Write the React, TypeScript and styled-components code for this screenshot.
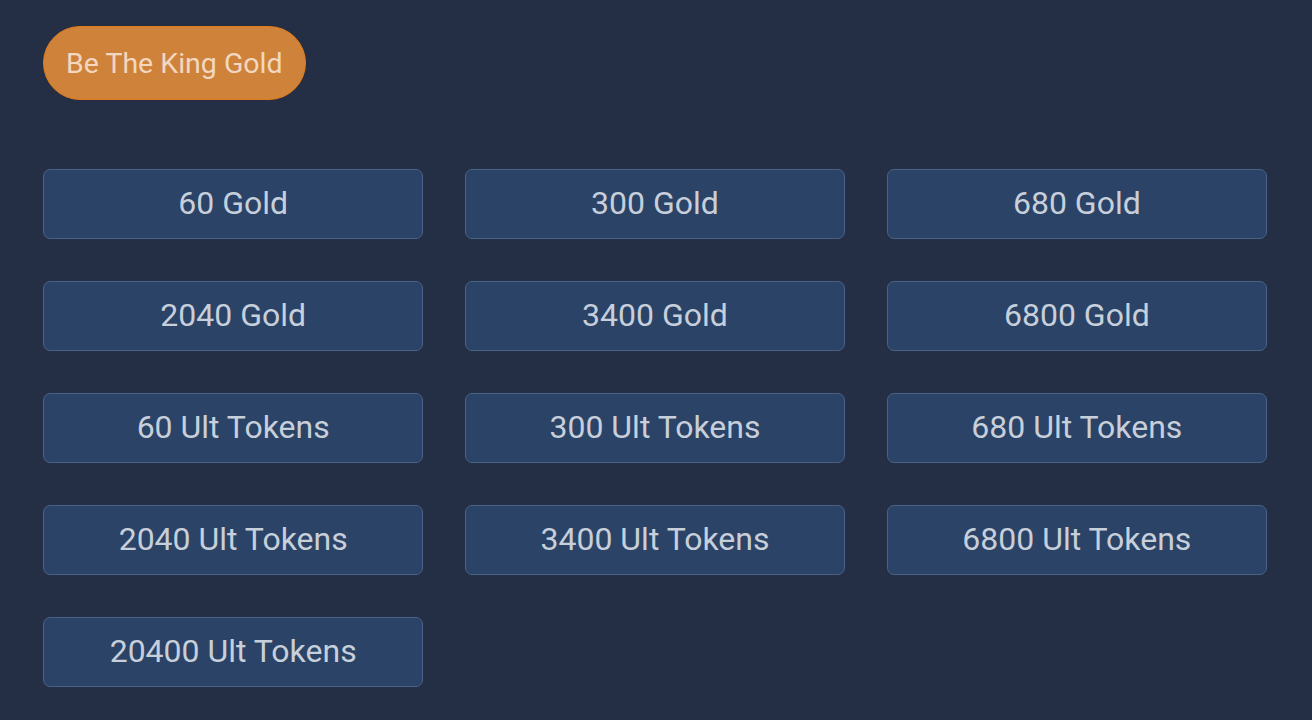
import React from 'react';
import styled, { createGlobalStyle } from 'styled-components';

const GlobalStyle = createGlobalStyle`
  html, body {
    margin: 0;
    padding: 0;
    background: #242e45;
  }
  body {
    font-family: Roboto, 'Liberation Sans', sans-serif;
  }
`;

const Page = styled.div`
  min-height: 720px;
  box-sizing: border-box;
  padding: 26px 45px 0 43px;
  background: #242e45;
`;

const Badge = styled.button`
  display: inline-flex;
  align-items: center;
  justify-content: center;
  height: 74px;
  padding: 0 22px;
  border-radius: 37px;
  border: 1.5px solid #e27a16;
  background: #cf823a;
  color: #f2d8c0;
  font-family: Roboto, 'Liberation Sans', sans-serif;
  font-size: 28.5px;
  cursor: pointer;
`;

const Grid = styled.div`
  margin-top: 69px;
  display: grid;
  grid-template-columns: repeat(3, 1fr);
  column-gap: 41.5px;
  row-gap: 42px;
`;

const Item = styled.button`
  height: 70px;
  padding: 0 0 2px;
  border-radius: 7px;
  border: 1.5px solid #4a6285;
  background: #2b4366;
  color: #c7cfdb;
  font-family: Roboto, 'Liberation Sans', sans-serif;
  font-size: 32px;
  cursor: pointer;
`;

const items = [
  '60 Gold',
  '300 Gold',
  '680 Gold',
  '2040 Gold',
  '3400 Gold',
  '6800 Gold',
  '60 Ult Tokens',
  '300 Ult Tokens',
  '680 Ult Tokens',
  '2040 Ult Tokens',
  '3400 Ult Tokens',
  '6800 Ult Tokens',
  '20400 Ult Tokens',
];

function App() {
  return (
    <Page>
      <GlobalStyle />
      <Badge>Be The King Gold</Badge>
      <Grid>
        {items.map((label) => (
          <Item key={label}>{label}</Item>
        ))}
      </Grid>
    </Page>
  );
}

export default App;
